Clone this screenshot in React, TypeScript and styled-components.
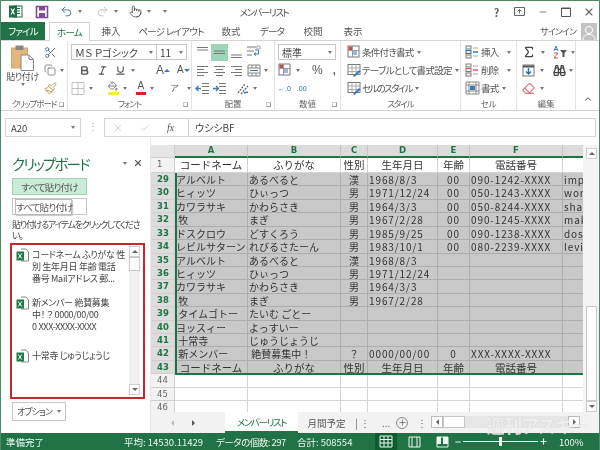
import React from 'react';
import styled, { createGlobalStyle } from 'styled-components';
import {
  Undo2, Redo2, Pointer, Scissors, Copy, Paintbrush, Bold, Italic, Underline, ChevronUp, X, Check, Minus, Plus,
  Binoculars, Eraser, Sigma, PaintBucket,
} from 'lucide-react';

const GlobalStyle = createGlobalStyle`
  html, body { margin: 0; padding: 0; background: #fff; }
  body {
    font-family: "Noto Sans CJK JP", "Noto Sans", sans-serif;
    font-feature-settings: "palt";
    color: #444;
  }
  * { box-sizing: border-box; }
  svg { flex-shrink: 0; }
`;

const GREEN = '#217346';

const Frame = styled.div`
  position: relative;
  width: 600px;
  height: 450px;
  overflow: hidden;
  display: flex;
  flex-direction: column;
  border: 1px solid #4f8a68;
  border-bottom: 0;
  background: #fff;
  filter: blur(0.3px);
`;

/* title bar */
const TitleBar = styled.div`
  height: 21px;
  flex-shrink: 0;
  display: grid;
  grid-template-columns: 203px 120px 1fr;
  align-items: center;
`;
const Qat = styled.div`
  display: flex;
  align-items: center;
  gap: 3px;
  padding-left: 7px;
`;
const QatGap = styled.span<{ $w: number }>`
  width: ${(p) => p.$w}px;
`;
const Title = styled.div`
  font-size: 9.5px;
  letter-spacing: -1.4px;
  color: #555;
  text-align: center;
`;
const WinButtons = styled.div`
  display: flex;
  align-items: center;
  justify-content: flex-end;
  gap: 8px;
  padding-right: 3px;
  color: #555;
`;
const WinBtn = styled.span`
  width: 15px;
  height: 15px;
  display: flex;
  align-items: center;
  justify-content: center;
  font-size: 11px;
  font-weight: 700;
  color: #666;
`;
const Caret = styled.span<{ $m?: number }>`
  display: inline-block;
  width: 0;
  height: 0;
  margin-left: ${(p) => p.$m ?? 2}px;
  border-left: 2.5px solid transparent;
  border-right: 2.5px solid transparent;
  border-top: 3px solid #777;
  flex-shrink: 0;
`;

/* tabs */
const TabRow = styled.div`
  height: 19px;
  flex-shrink: 0;
  display: flex;
  align-items: stretch;
  border-bottom: 1px solid #d4d4d4;
  position: relative;
`;
const FileTab = styled.div`
  width: 44px;
  margin-right: 4px;
  background: ${GREEN};
  color: #fff;
  font-size: 9.5px;
  letter-spacing: -0.8px;
  display: flex;
  align-items: center;
  justify-content: center;
`;
const Tab = styled.div<{ $w: number; $active?: boolean; $tight?: boolean }>`
  width: ${(p) => p.$w}px;
  font-size: 9.5px;
  letter-spacing: ${(p) => (p.$tight ? -0.7 : 0)}px;
  white-space: nowrap;
  display: flex;
  align-items: center;
  justify-content: center;
  color: ${(p) => (p.$active ? GREEN : '#555')};
  background: #fff;
  ${(p) =>
    p.$active &&
    `border: 1px solid #d4d4d4; border-bottom: 0; height: 19px;`}
`;
const SignIn = styled.div`
  margin-left: auto;
  display: flex;
  align-items: center;
  gap: 5px;
  font-size: 9px;
  letter-spacing: -0.9px;
  color: #555;
  padding-right: 2px;
`;
const Avatar = styled.div`
  width: 16px;
  height: 17px;
  background: #c4c4c4;
  display: flex;
  align-items: flex-end;
  justify-content: center;
`;

/* ribbon */
const Ribbon = styled.div`
  height: 70px;
  flex-shrink: 0;
  display: flex;
  border-bottom: 1px solid #d4d4d4;
  position: relative;
`;
const Group = styled.div<{ $w: number }>`
  width: ${(p) => p.$w}px;
  flex-shrink: 0;
  display: flex;
  flex-direction: column;
  border-right: 1px solid #e2e2e2;
`;
const GroupBody = styled.div<{ $pl?: number }>`
  flex: 1;
  display: flex;
  flex-direction: column;
  padding: 2px 0 0 ${(p) => p.$pl ?? 3}px;
  min-height: 0;
`;
const GroupLabel = styled.div<{ $tight?: boolean }>`
  position: relative;
  height: 13px;
  font-size: 8.5px;
  letter-spacing: ${(p) => (p.$tight ? -1.1 : 0)}px;
  line-height: 12px;
  color: #666;
  text-align: center;
`;
const Launcher = styled.span`
  position: absolute;
  right: 3px;
  top: 5px;
  width: 5px;
  height: 5px;
  border: 1px solid #999;
  border-top-color: #ccc;
  border-left-color: #ccc;
`;
const RRow = styled.div<{ $gap?: number; $h?: number }>`
  height: ${(p) => p.$h ?? 18}px;
  display: flex;
  align-items: center;
  gap: ${(p) => p.$gap ?? 3}px;
`;
const RGap = styled.span<{ $w: number }>`
  width: ${(p) => p.$w}px;
  flex-shrink: 0;
`;
const ClipLayout = styled.div`
  display: flex;
  gap: 5px;
  padding-left: 2px;
`;
const PasteBig = styled.div`
  width: 33px;
  padding-top: 2px;
  display: flex;
  flex-direction: column;
  align-items: center;
  gap: 1px;
  font-size: 9px;
  letter-spacing: -0.4px;
  line-height: 10px;
  color: #555;
  white-space: nowrap;
`;
const SmallStack = styled.div`
  display: flex;
  flex-direction: column;
  gap: 0;
`;
const Combo = styled.div<{ $w: number }>`
  width: ${(p) => p.$w}px;
  height: 16px;
  border: 1px solid #c6c6c6;
  margin-right: -1px;
  padding: 0 3px;
  display: flex;
  align-items: center;
  justify-content: space-between;
  font-size: 10px;
  color: #444;
  background: #fff;
`;
const Glyph = styled.span<{ $color?: string; $size?: number; $bold?: boolean }>`
  font-size: ${(p) => p.$size ?? 11}px;
  line-height: 1;
  font-family: "Liberation Sans", sans-serif;
  font-weight: ${(p) => (p.$bold ? 700 : 400)};
  color: ${(p) => p.$color ?? '#555'};
`;
const AlignCell = styled.span<{ $on?: boolean }>`
  width: 17px;
  height: 17px;
  display: flex;
  align-items: center;
  justify-content: center;
  background: ${(p) => (p.$on ? '#9fd5b7' : 'transparent')};
`;
const StyleItem = styled.div<{ $tight?: boolean }>`
  height: 18px;
  display: flex;
  align-items: center;
  gap: 1px;
  font-size: 9.5px;
  letter-spacing: ${(p) => (p.$tight ? -1.6 : -0.7)}px;
  color: #555;
  white-space: nowrap;
`;
const ColorBar = styled.span<{ $c: string }>`
  display: flex;
  flex-direction: column;
  align-items: center;
  border-bottom: 3px solid ${(p) => p.$c};
  width: 13px;
  height: 14px;
`;
const Collapse = styled.div`
  width: 24px;
  display: flex;
  align-items: flex-end;
  justify-content: center;
  padding-bottom: 6px;
  color: #555;
`;

/* formula bar */
const FormulaBar = styled.div`
  height: 27px;
  flex-shrink: 0;
  padding: 7px 3px 1px 4px;
  display: flex;
  align-items: stretch;
`;
const NameBox = styled.div`
  width: 76px;
  border: 1px solid #d4d4d4;
  display: flex;
  align-items: center;
  justify-content: space-between;
  padding: 0 5px 0 5px;
  font-size: 9.5px;
  color: #444;
`;
const Dots = styled.div`
  width: 23px;
  text-align: center;
  color: #aaa;
  font-size: 10px;
  line-height: 16px;
`;
const FxBox = styled.div`
  width: 84px;
  border: 1px solid #d4d4d4;
  border-right: 0;
  display: flex;
  align-items: center;
  gap: 17px;
  padding-left: 8px;
  color: #c8c8c8;
`;
const FxLabel = styled.span`
  font-family: "Liberation Serif", serif;
  font-style: italic;
  font-size: 10px;
  color: #555;
`;
const FormulaInput = styled.div`
  flex: 1;
  border: 1px solid #d4d4d4;
  display: flex;
  align-items: center;
  padding-left: 6px;
  font-size: 10px;
  color: #444;
`;

/* main */
const Main = styled.div`
  flex: 1;
  min-height: 0;
  display: flex;
`;
const Panel = styled.div`
  width: 150px;
  flex-shrink: 0;
  padding: 14px 5px 0 8px;
  display: flex;
  flex-direction: column;
  border-right: 1px solid #e6e6e6;
`;
const PanelHead = styled.div`
  display: flex;
  align-items: center;
  justify-content: space-between;
  height: 22px;
  padding: 0 1px 0 3px;
`;
const PanelTitle = styled.div`
  font-size: 14.5px;
  letter-spacing: -1.8px;
  color: ${GREEN};
`;
const PanelTools = styled.div`
  display: flex;
  align-items: center;
  gap: 6px;
  padding-right: 1px;
  color: #555;
`;
const PasteAll = styled.div`
  width: 75px;
  height: 17px;
  margin: 4px 0 0 3px;
  background: #c9ecd8;
  border: 1px solid #9fd5b7;
  font-size: 9.5px;
  letter-spacing: -0.8px;
  color: #555;
  display: flex;
  align-items: center;
  justify-content: center;
`;
const GhostBtn = styled.div`
  position: relative;
  width: 75px;
  height: 17px;
  margin: 3px 0 0 3px;
  border: 1px solid #c6c6c6;
`;
const Tip = styled.div`
  position: absolute;
  left: 2px;
  top: 0;
  width: 57px;
  height: 16px;
  background: #fff;
  border: 1px solid #bbb;
  box-shadow: 1px 1px 1px #ccc;
  font-size: 9.5px;
  letter-spacing: -0.8px;
  line-height: 14px;
  text-align: center;
  color: #555;
  white-space: nowrap;
`;
const Hint = styled.div`
  margin: 4px 0 0 3px;
  font-size: 9px;
  letter-spacing: -1.3px;
  line-height: 11px;
  color: #444;
  white-space: pre;
`;
const ClipList = styled.div`
  height: 156px;
  margin-top: 2px;
  margin-left: 1px;
  border: 2px solid #c4272c;
  display: flex;
  width: 135px;
  background: #fff;
`;
const ClipItems = styled.div`
  flex: 1;
  padding: 3px 0 0 4px;
  display: flex;
  flex-direction: column;
`;
const ClipItem = styled.div<{ $h: number }>`
  height: ${(p) => p.$h}px;
  display: flex;
  gap: 3px;
`;
const ClipText = styled.div`
  padding-top: 1px;
  font-size: 9px;
  letter-spacing: -0.3px;
  line-height: 12px;
  color: #444;
  white-space: pre;
`;
const VScroll = styled.div`
  width: 11px;
  margin: 1px 3px 2px 0;
  background: #f0f0f0;
  display: flex;
  flex-direction: column;
`;
const ScrollBtn = styled.div`
  height: 11px;
  flex-shrink: 0;
  background: #fff;
  border: 1px solid #cfcfcf;
  display: flex;
  align-items: center;
  justify-content: center;
`;
const Thumb = styled.div<{ $h: number }>`
  height: ${(p) => p.$h}px;
  background: #fff;
  border: 1px solid #c6c6c6;
`;
const Spacer = styled.div`
  flex: 1;
`;
const Arrow = styled.span<{ $dir: 'up' | 'down' | 'left' | 'right'; $c?: string }>`
  width: 0;
  height: 0;
  border: 3px solid transparent;
  ${(p) =>
    p.$dir === 'up'
      ? `border-bottom: 3px solid ${p.$c ?? '#666'}; border-top: 0;`
      : p.$dir === 'down'
        ? `border-top: 3px solid ${p.$c ?? '#666'}; border-bottom: 0;`
        : p.$dir === 'left'
          ? `border-right: 3px solid ${p.$c ?? '#666'}; border-left: 0;`
          : `border-left: 3px solid ${p.$c ?? '#666'}; border-right: 0;`}
`;
const OptionBtn = styled.div`
  width: 54px;
  height: 19px;
  margin: 3px 0 0 3px;
  border: 1px solid #c6c6c6;
  font-size: 9px;
  letter-spacing: -0.9px;
  color: #555;
  display: flex;
  align-items: center;
  justify-content: center;
  gap: 5px;
`;

/* sheet */
const SheetWrap = styled.div`
  flex: 1;
  min-width: 0;
  display: flex;
  flex-direction: column;
`;
const SheetArea = styled.div`
  flex: 1;
  min-height: 0;
  display: flex;
  padding-top: 7px;
`;
const GridBox = styled.div`
  position: relative;
  width: 433px;
  overflow: hidden;
  display: grid;
  grid-template-columns: 24px 73px 93px 27px 70px 32px 93px 21px;
  grid-template-rows: 13px 15px repeat(18, 13.43px);
`;
const Corner = styled.div`
  background: #e6e6e6;
  border-right: 1px solid #d0d0d0;
  border-bottom: 1px solid #d0d0d0;
`;
const ColHead = styled.div`
  background: #dcdcdc;
  border-right: 1px solid #c4c4c4;
  border-bottom: 2px solid ${GREEN};
  font-family: "DejaVu Sans", sans-serif;
  font-size: 8.5px;
  font-weight: 700;
  line-height: 11px;
  text-align: center;
  color: ${GREEN};
`;
const RowHead = styled.div<{ $sel?: boolean }>`
  font-family: "DejaVu Sans", sans-serif;
  font-size: 8.5px;
  font-weight: ${(p) => (p.$sel ? 700 : 400)};
  line-height: 13px;
  padding-left: 6px;
  color: ${(p) => (p.$sel ? GREEN : '#666')};
  background: ${(p) => (p.$sel ? '#dcdcdc' : '#f2f2f2')};
  border-bottom: 1px solid #cfcfcf;
  border-right: 1px solid #d0d0d0;
`;
const Cell = styled.div<{ $sel?: boolean; $center?: boolean; $big?: boolean; $latin?: boolean }>`
  white-space: pre;
  font-feature-settings: normal;
  font-size: ${(p) => (p.$big ? 10.5 : 10)}px;
  letter-spacing: ${(p) => (p.$latin ? 0.9 : 0)}px;
  line-height: 13px;
  padding: 0 1px;
  color: #333;
  text-align: ${(p) => (p.$center ? 'center' : 'left')};
  background: ${(p) => (p.$sel ? '#c8c8c8' : '#fff')};
  border-right: 1px solid ${(p) => (p.$sel ? '#adadad' : '#d4d4d4')};
  border-bottom: 1px solid ${(p) => (p.$sel ? '#adadad' : '#d4d4d4')};
`;
const Selection = styled.div`
  position: absolute;
  left: 24px;
  top: 28px;
  width: 409px;
  height: 202px;
  border-left: 2px solid ${GREEN};
  border-bottom: 2px solid ${GREEN};
  pointer-events: none;
`;
const SheetScroll = styled.div`
  width: 16px;
  padding: 3px 2px 0 3px;
  display: flex;
  flex-direction: column;
  background: #f4f4f4;
`;
const SheetBar = styled.div`
  height: 21px;
  flex-shrink: 0;
  display: flex;
  align-items: stretch;
  background: #f2f2f2;
  position: relative;
`;
const SheetNav = styled.div`
  width: 74px;
  display: flex;
  align-items: center;
  gap: 18px;
  padding-left: 20px;
`;
const SheetTab = styled.div<{ $w: number; $active?: boolean }>`
  width: ${(p) => p.$w}px;
  font-size: 9.5px;
  letter-spacing: ${(p) => (p.$active ? -1.3 : 0)}px;
  white-space: nowrap;
  display: flex;
  align-items: center;
  justify-content: center;
  color: ${(p) => (p.$active ? GREEN : '#555')};
  background: ${(p) => (p.$active ? '#fff' : 'transparent')};
  border-bottom: ${(p) => (p.$active ? `2px solid ${GREEN}` : '0')};
`;
const SheetMisc = styled.div`
  width: 76px;
  display: flex;
  align-items: center;
  font-size: 10px;
  color: #666;
`;
const MiscGap = styled.span<{ $w: number }>`
  width: ${(p) => p.$w}px;
`;
const PlusCircle = styled.span`
  width: 12px;
  height: 12px;
  border-radius: 50%;
  border: 1px solid #888;
  margin-left: 6px;
  display: flex;
  align-items: center;
  justify-content: center;
  color: #666;
`;
const HScroll = styled.div`
  width: 149px;
  height: 12px;
  margin: 4px 0 0 0;
  display: flex;
  background: #e6e6e6;
`;
const HBtn = styled.div`
  width: 12px;
  height: 12px;
  background: #fff;
  border: 1px solid #bbb;
  display: flex;
  align-items: center;
  justify-content: center;
`;
const HThumb = styled.div`
  width: 22px;
  background: #fff;
  border: 1px solid #c6c6c6;
`;
const Watermark = styled.div`
  position: absolute;
  right: 11px;
  bottom: -3px;
  font-size: 18px;
  letter-spacing: -0.4px;
  line-height: 22px;
  font-weight: 700;
  color: rgba(255, 255, 255, 0.72);
  text-shadow: 0 0 1px rgba(130, 130, 130, 0.4);
  pointer-events: none;
  z-index: 2;
`;

/* status */
const StatusBar = styled.div`
  height: 17px;
  flex-shrink: 0;
  margin: 0 -1px;
  background: ${GREEN};
  color: #eef6f1;
  font-size: 9.5px;
  display: flex;
  align-items: center;
  padding-left: 6px;
`;
const StatusText = styled.span<{ $w: number; $tight?: boolean }>`
  width: ${(p) => p.$w}px;
  flex-shrink: 0;
  white-space: nowrap;
  letter-spacing: ${(p) => (p.$tight ? -0.5 : 0)}px;
`;
const ViewBtn = styled.span<{ $on?: boolean }>`
  width: 22px;
  height: 17px;
  margin-right: 6px;
  display: flex;
  align-items: center;
  justify-content: center;
  background: ${(p) => (p.$on ? '#0f5c31' : 'transparent')};
`;
const ZoomBox = styled.span`
  margin-left: -5px;
  display: flex;
  align-items: center;
  gap: 1px;
`;
const SliderTrack = styled.span`
  position: relative;
  width: 75px;
  height: 1px;
  background: #eef6f1;
`;
const SliderKnob = styled.span`
  position: absolute;
  left: 36px;
  top: -4px;
  width: 3px;
  height: 9px;
  background: #eef6f1;
`;
const Percent = styled.span`
  margin-left: 11px;
`;

const ExcelLogo = () => (
  <svg width="15" height="15" viewBox="0 0 15 15">
    <rect x="6" y="2" width="8" height="11" fill="#fff" stroke="#1d6f42" />
    <path d="M8 4.500h4M8 7h4M8 9.500h4" stroke="#1d6f42" />
    <rect x="1" y="1.500" width="8" height="12" fill="#1d6f42" />
    <path d="M3 4.500l3.500 6M6.500 4.500l-3.500 6" stroke="#fff" strokeWidth="1.2" />
  </svg>
);
const SaveIcon = () => (
  <svg width="14" height="14" viewBox="0 0 14 14">
    <path d="M1.500 1.500h11v11h-11z" fill="#fff" stroke="#7b4b94" strokeWidth="1.6" />
    <path d="M4 2v3.500h6V2" fill="#7b4b94" />
    <rect x="4" y="8" width="6" height="4" fill="#7b4b94" />
  </svg>
);
const PasteIcon = () => (
  <svg width="23" height="26" viewBox="0 0 23 26">
    <rect x="0.500" y="3" width="16" height="20" fill="#e3b67c" stroke="#d3a66c" />
    <rect x="4.500" y="0.500" width="8" height="4.500" fill="#888" />
    <path d="M10 10h8l4.500 4.500V25.500H10z" fill="#fff" stroke="#888" />
    <path d="M18 10v4.500h4.500" fill="none" stroke="#888" />
  </svg>
);
const Lines = ({ kind }: { kind: string }) => {
  const rows: Record<string, string> = {
    top: 'M2 2.500h11M2 5h11',
    mid: 'M2 6h11M2 8.500h11',
    bot: 'M2 10h11M2 12.500h11',
    left: 'M2 3.500h11M2 6.500h7M2 9.500h11M2 12.500h7',
    center: 'M2 3.500h11M4 6.500h7M2 9.500h11M4 12.500h7',
    right: 'M2 3.500h11M6 6.500h7M2 9.500h11M6 12.500h7',
  };
  return (
    <svg width="15" height="15" viewBox="0 0 15 15">
      <path d={rows[kind]} stroke="#777" fill="none" />
    </svg>
  );
};
const IndentIcon = ({ flip }: { flip?: boolean }) => (
  <svg width="15" height="13" viewBox="0 0 15 13">
    <path d="M7 1.500h7M7 4.500h7M7 8.500h7M7 11.500h7" stroke="#777" />
    <path d={flip ? 'M1 6.500h5M4 4l2.500 2.500L4 9' : 'M6 6.500H1M3.500 4L1 6.500 3.500 9'} fill="none" stroke="#3d7ab5" strokeWidth="1.300" />
  </svg>
);
const OrientIcon = () => (
  <svg width="14" height="13" viewBox="0 0 14 13">
    <path d="M2 11L9 2M5 12l7-8" stroke="#666" strokeWidth="1.300" strokeDasharray="2 1" />
    <path d="M8 11l4-1" stroke="#3d7ab5" strokeWidth="1.300" />
  </svg>
);
const WrapIcon = () => (
  <svg width="15" height="14" viewBox="0 0 15 14">
    <path d="M1 2h9M1 6h7M1 10h5" stroke="#777" />
    <path d="M9 5h3.500v4H8M10 7.500L8 9l2 1.500" fill="none" stroke="#3d7ab5" />
    <path d="M11 1h3v3h-3z" fill="#fff" stroke="#aaa" />
  </svg>
);
const MergeIcon = () => (
  <svg width="14" height="13" viewBox="0 0 14 13">
    <path d="M1 1h12v11H1zM1 4h12M1 9h12M5 1v3M9 1v3M5 9v3M9 9v3" fill="#fff" stroke="#888" />
    <path d="M3 6.500h8" stroke="#3d7ab5" />
  </svg>
);
const BorderIcon = () => (
  <svg width="14" height="13" viewBox="0 0 14 13">
    <path d="M1 .500h12v12H1zM1 6.500h12M7 .500v12" fill="none" stroke="#c0c0c0" />
  </svg>
);
const TableIcon = ({ accent = '#3d7ab5' }: { accent?: string }) => (
  <svg width="14" height="14" viewBox="0 0 14 14">
    <rect x="1" y="1.500" width="12" height="10" fill="#fff" stroke="#777" />
    <path d="M1 5h12M1 8.500h12M5 1.500v10M9 1.500v10" stroke="#aaa" />
    <path d="M6 13l6-6 1.500 1.500-6 5.500z" fill={accent} />
  </svg>
);
const CondIcon = () => (
  <svg width="14" height="14" viewBox="0 0 14 14">
    <rect x="1" y="1" width="11" height="11" fill="#fff" stroke="#777" />
    <rect x="1.500" y="1.500" width="4" height="4" fill="#c0504d" />
    <rect x="6" y="6" width="4" height="4" fill="#9bb7d9" />
    <path d="M1 5.500h11M5.500 1v11" stroke="#999" />
  </svg>
);
const CellIcon = ({ mark }: { mark: string }) => (
  <svg width="15" height="14" viewBox="0 0 15 14">
    <rect x="1" y="1" width="5" height="3" fill="#fff" stroke="#777" />
    <rect x="1" y="5.500" width="5" height="3" fill="#eef" stroke={mark} />
    <rect x="1" y="10" width="5" height="3" fill="#fff" stroke="#777" />
    <path d="M8 7h5" stroke={mark} strokeWidth="1.400" />
    <path d="M8 3h5M8 11h5" stroke="#aaa" />
  </svg>
);
const FormatIcon = () => (
  <svg width="15" height="14" viewBox="0 0 15 14">
    <path d="M1 1h13v12H1zM1 4h13M1 10h13M4 1v12M11 1v12" fill="#fff" stroke="#888" />
    <rect x="5" y="5" width="5" height="4" fill="#3d7ab5" />
  </svg>
);
const SortIcon = () => (
  <svg width="15" height="14" viewBox="0 0 15 14">
    <path d="M1 6l2-5 2 5M1.800 4.500h2.400" fill="none" stroke="#3d7ab5" />
    <path d="M1 8h4l-4 5h4" fill="none" stroke="#c0504d" />
    <path d="M7 5h7l-2.500 3v4h-2V8z" fill="#555" />
  </svg>
);
const FileMini = () => (
  <svg width="13" height="16" viewBox="0 0 13 16">
    <path d="M5 1h5l2.500 3v9H5" fill="#fff" stroke="#888" />
    <rect x="0.500" y="3.500" width="7.500" height="9" fill="#1d7a46" />
    <path d="M2.300 5.500l3.500 5M5.800 5.500l-3.500 5" stroke="#fff" />
  </svg>
);
const Grid3 = () => (
  <svg width="14" height="13" viewBox="0 0 14 13">
    <path d="M1 1h12v11H1zM1 4.500h12M1 8h12M5 1v11M9 1v11" fill="none" stroke="#eef6f1" />
  </svg>
);

const ic = { strokeWidth: 1.6 };

const columns = ['A', 'B', 'C', 'D', 'E', 'F', ''];
type Row = [string, string, string, string, string, string, string];
const headerRow: Row = ['コードネーム', 'ふりがな', '性別', '生年月日', '年齢', '電話番号', ''];
const rows: [number, Row][] = [
  [29, ['アルベルト', 'あるべると', '漢', '1968/8/3', '00', '090-1242-XXXX', 'impa']],
  [30, ['ヒィッツ', 'ひぃっつ', '男', '1971/12/24', '00', '050-1243-XXXX', 'wor']],
  [31, ['カワラサキ', 'かわらさき', '男', '1964/3/3', '00', '050-8244-XXXX', 'shal']],
  [32, [' 牧', 'まぎ', '男', '1967/2/28', '00', '090-1245-XXXX', 'mak']],
  [33, ['ドスクロウ', 'どすくろう', '男', '1985/9/25', '00', '090-1238-XXXX', 'dosı']],
  [34, ['レビルサターン', 'れびるさたーん', '男', '1983/10/1', '00', '080-2239-XXXX', 'levil']],
  [35, ['アルベルト', 'あるべると', '漢', '1968/8/3', '', '', '']],
  [36, ['ヒィッツ', 'ひぃっつ', '男', '1971/12/24', '', '', '']],
  [37, ['カワラサキ', 'かわらさき', '男', '1964/3/3', '', '', '']],
  [38, [' 牧', 'まぎ', '男', '1967/2/28', '', '', '']],
  [39, [' タイムゴトー', 'たいむ ごとー', '', '', '', '', '']],
  [40, ['ヨッスィー', 'よっすいー', '', '', '', '', '']],
  [41, [' 十常寺', 'じゅうじょうじ', '', '', '', '', '']],
  [42, [' 新メンバー', ' 絶賛募集中！', '？', '0000/00/00', '0', 'XXX-XXXX-XXXX', '']],
];
const centered = [2, 4];

export default function App() {
  return (
    <Frame>
      <GlobalStyle />
      <TitleBar>
        <Qat>
          <ExcelLogo />
          <QatGap $w={6} />
          <SaveIcon />
          <QatGap $w={5} />
          <Undo2 size={13} color="#2b6ea8" {...ic} />
          <Caret />
          <QatGap $w={8} />
          <Redo2 size={13} color="#bbb" {...ic} />
          <Caret />
          <QatGap $w={5} />
          <Pointer size={13} color="#555" {...ic} />
          <Caret />
          <QatGap $w={4} />
          <Caret />
        </Qat>
        <Title>メンバーリスト</Title>
        <WinButtons>
          <WinBtn>?</WinBtn>
          <WinBtn>
            <svg width="11" height="9" viewBox="0 0 11 9">
              <path d="M.5.5h10v8H.5zM5.500 2.500v4M3.500 4.500l2-2 2 2" fill="none" stroke="#666" />
            </svg>
          </WinBtn>
          <WinBtn>
            <Minus size={10} />
          </WinBtn>
          <WinBtn>
            <svg width="10" height="10" viewBox="0 0 10 10">
              <path d="M.5 1h9v8.500h-9z" fill="none" stroke="#555" />
              <path d="M.5 1.500h9" stroke="#555" />
            </svg>
          </WinBtn>
          <WinBtn>
            <X size={12} strokeWidth={2.2} />
          </WinBtn>
        </WinButtons>
      </TitleBar>

      <TabRow>
        <FileTab>ファイル</FileTab>
        <Tab $w={41} $active $tight>ホーム</Tab>
        <Tab $w={42}>挿入</Tab>
        <Tab $w={78} $tight>ページ レイアウト</Tab>
        <Tab $w={42}>数式</Tab>
        <Tab $w={40} $tight>データ</Tab>
        <Tab $w={42}>校閲</Tab>
        <Tab $w={38}>表示</Tab>
        <SignIn>
          サインイン
          <Avatar>
            <svg width="14" height="15" viewBox="0 0 14 15">
              <circle cx="7" cy="5" r="3.600" fill="#c4c4c4" stroke="#fff" />
              <path d="M1 15c0-4 2.500-5.500 6-5.500s6 1.500 6 5.500" fill="#c4c4c4" stroke="#fff" />
            </svg>
          </Avatar>
        </SignIn>
      </TabRow>

      <Ribbon>
        <Group $w={67}>
          <GroupBody>
            <ClipLayout>
              <PasteBig>
                <PasteIcon />
                貼り付け
                <Caret $m={0} />
              </PasteBig>
              <SmallStack>
                <RRow><Scissors size={13} color="#4a6a8a" {...ic} /></RRow>
                <RRow $gap={2}><Copy size={12} color="#777" {...ic} /><Caret /></RRow>
                <RRow><Paintbrush size={13} color="#b8923c" {...ic} /></RRow>
              </SmallStack>
            </ClipLayout>
          </GroupBody>
          <GroupLabel $tight>クリップボード<Launcher /></GroupLabel>
        </Group>

        <Group $w={124}>
          <GroupBody>
            <RRow $gap={0}>
              <Combo $w={86}>ＭＳ Ｐゴシック<Caret /></Combo>
              <Combo $w={31}>11<Caret /></Combo>
            </RRow>
            <RRow $gap={7}>
              <RGap $w={1} />
              <Bold size={11} strokeWidth={3} color="#555" />
              <Italic size={11} color="#555" strokeWidth={2.4} />
              <RRow $gap={3}>
                <Underline size={11} color="#555" strokeWidth={2.4} />
                <Caret />
              </RRow>
              <RGap $w={7} />
              <RRow $gap={0}>
                <Glyph $size={12}>A</Glyph>
                <Arrow $dir="up" $c="#3d7ab5" />
              </RRow>
              <RRow $gap={0}>
                <Glyph $size={10}>A</Glyph>
                <Arrow $dir="down" $c="#3d7ab5" />
              </RRow>
            </RRow>
            <RRow $gap={4}>
              <BorderIcon />
              <Caret $m={0} />
              <RGap $w={7} />
              <ColorBar $c="#f5f03c"><PaintBucket size={10} color="#666" /></ColorBar>
              <Caret $m={0} />
              <RGap $w={1} />
              <ColorBar $c="#d8232a"><Glyph $size={10}>A</Glyph></ColorBar>
              <Caret $m={0} />
              <RGap $w={8} />
              <Glyph $size={9}>ア</Glyph>
              <Caret $m={4} />
            </RRow>
          </GroupBody>
          <GroupLabel $tight>フォント<Launcher /></GroupLabel>
        </Group>

        <Group $w={83}>
          <GroupBody $pl={2}>
            <RRow $gap={0}>
              <AlignCell><Lines kind="top" /></AlignCell>
              <AlignCell $on><Lines kind="mid" /></AlignCell>
              <AlignCell><Lines kind="bot" /></AlignCell>
              <AlignCell><WrapIcon /></AlignCell>
            </RRow>
            <RRow $gap={0}>
              <AlignCell><Lines kind="left" /></AlignCell>
              <AlignCell><Lines kind="center" /></AlignCell>
              <AlignCell><Lines kind="right" /></AlignCell>
              <AlignCell><MergeIcon /></AlignCell>
              <Caret />
            </RRow>
            <RRow $gap={0}>
              <AlignCell><IndentIcon /></AlignCell>
              <AlignCell><IndentIcon flip /></AlignCell>
              <RGap $w={6} />
              <AlignCell><OrientIcon /></AlignCell>
              <Caret />
            </RRow>
          </GroupBody>
          <GroupLabel>配置<Launcher /></GroupLabel>
        </Group>

        <Group $w={66}>
          <GroupBody>
            <RRow><Combo $w={58}>標準<Caret /></Combo></RRow>
            <RRow $gap={4}>
              <CondIcon />
              <Caret $m={0} />
              <RGap $w={4} />
              <Glyph $size={12}>%</Glyph>
              <RGap $w={2} />
              <Glyph $size={11} $bold>,</Glyph>
            </RRow>
            <RRow $gap={6}>
              <Glyph $size={7} $color="#2b6ea8">←.0</Glyph>
              <Glyph $size={7} $color="#2b6ea8">.00</Glyph>
            </RRow>
          </GroupBody>
          <GroupLabel>数値<Launcher /></GroupLabel>
        </Group>

        <Group $w={120}>
          <GroupBody $pl={6}>
            <StyleItem><CondIcon />条件付き書式<Caret /></StyleItem>
            <StyleItem><TableIcon />テーブルとして書式設定<Caret /></StyleItem>
            <StyleItem $tight><TableIcon />セルのスタイル<Caret /></StyleItem>
          </GroupBody>
          <GroupLabel $tight>スタイル</GroupLabel>
        </Group>

        <Group $w={56}>
          <GroupBody $pl={4}>
            <StyleItem><CellIcon mark="#2b6ea8" />挿入<Caret $m={7} /></StyleItem>
            <StyleItem><CellIcon mark="#d05a50" />削除<Caret $m={7} /></StyleItem>
            <StyleItem><FormatIcon />書式<Caret /></StyleItem>
          </GroupBody>
          <GroupLabel>セル</GroupLabel>
        </Group>

        <Group $w={59}>
          <GroupBody $pl={5}>
            <RRow $gap={3}>
              <Sigma size={14} color="#444" strokeWidth={2.2} />
              <Caret />
              <RGap $w={2} />
              <SortIcon />
              <Caret $m={0} />
            </RRow>
            <RRow $gap={3}>
              <svg width="13" height="13" viewBox="0 0 13 13">
                <rect x="1" y="1" width="11" height="11" fill="#fff" stroke="#777" />
                <path d="M1 2.500h11" stroke="#555" strokeWidth="2" />
                <path d="M6.500 4v6M4 7.500l2.500 2.500L9 7.500" fill="none" stroke="#2b6ea8" strokeWidth="1.500" />
              </svg>
              <Caret />
              <RGap $w={3} />
              <Binoculars size={13} color="#444" strokeWidth={2.4} />
              <Caret $m={0} />
            </RRow>
            <RRow $gap={3}>
              <Eraser size={13} color="#d9707a" strokeWidth={2} />
              <Caret />
            </RRow>
          </GroupBody>
          <GroupLabel>編集</GroupLabel>
        </Group>

        <Collapse>
          <ChevronUp size={10} strokeWidth={2.4} />
        </Collapse>
      </Ribbon>

      <FormulaBar>
        <NameBox>A20<Caret /></NameBox>
        <Dots>⋮</Dots>
        <FxBox>
          <X size={10} />
          <Check size={10} />
          <FxLabel>fx</FxLabel>
        </FxBox>
        <FormulaInput>ウシシBF</FormulaInput>
      </FormulaBar>

      <Main>
        <Panel>
          <PanelHead>
            <PanelTitle>クリップボード</PanelTitle>
            <PanelTools>
              <Caret $m={0} />
              <X size={10} strokeWidth={2.6} />
            </PanelTools>
          </PanelHead>
          <PasteAll>すべて貼り付け</PasteAll>
          <GhostBtn>
            <Tip>すべて貼り付け</Tip>
          </GhostBtn>
          <Hint>{'貼り付けるアイテムをクリックしてくださ\nい。'}</Hint>
          <ClipList>
            <ClipItems>
              <ClipItem $h={48}>
                <FileMini />
                <ClipText>{'コードネーム ふりがな 性\n別 生年月日 年齢 電話\n番号 Mailアドレス 郵...'}</ClipText>
              </ClipItem>
              <ClipItem $h={53}>
                <FileMini />
                <ClipText>{'新メンバー 絶賛募集\n中！ ？ 0000/00/00\n0 XXX-XXXX-XXXX'}</ClipText>
              </ClipItem>
              <ClipItem $h={30}>
                <FileMini />
                <ClipText>十常寺 じゅうじょうじ</ClipText>
              </ClipItem>
            </ClipItems>
            <VScroll>
              <ScrollBtn><Arrow $dir="up" /></ScrollBtn>
              <Thumb $h={14} />
              <Spacer />
              <ScrollBtn><Arrow $dir="down" /></ScrollBtn>
            </VScroll>
          </ClipList>
          <OptionBtn>オプション<Caret $m={0} /></OptionBtn>
        </Panel>

        <SheetWrap>
          <SheetArea>
            <GridBox>
              <Corner />
              {columns.map((c, i) => (
                <ColHead key={i}>{c}</ColHead>
              ))}
              <RowHead>1</RowHead>
              {headerRow.map((v, i) => (
                <Cell key={i} $center $big>{v}</Cell>
              ))}
              {rows.map(([n, r]) => (
                <React.Fragment key={n}>
                  <RowHead $sel>{n}</RowHead>
                  {r.map((v, i) => (
                    <Cell key={i} $sel $center={centered.includes(i)} $latin={i >= 3}>{v}</Cell>
                  ))}
                </React.Fragment>
              ))}
              <RowHead $sel>43</RowHead>
              {headerRow.map((v, i) => (
                <Cell key={i} $sel $center $big>{v}</Cell>
              ))}
              {[44, 45, 46].map((n) => (
                <React.Fragment key={n}>
                  <RowHead>{n}</RowHead>
                  {headerRow.map((_, i) => (
                    <Cell key={i} />
                  ))}
                </React.Fragment>
              ))}
              <Selection />
            </GridBox>
            <SheetScroll>
              <ScrollBtn><Arrow $dir="up" /></ScrollBtn>
              <Spacer />
              <Thumb $h={95} />
              <ScrollBtn><Arrow $dir="down" /></ScrollBtn>
            </SheetScroll>
          </SheetArea>
          <SheetBar>
            <SheetNav>
              <Arrow $dir="left" $c="#bbb" />
              <Arrow $dir="right" $c="#555" />
            </SheetNav>
            <SheetTab $w={73} $active>メンバーリスト</SheetTab>
            <SheetTab $w={57}>月間予定</SheetTab>
            <SheetMisc>
              | ⋮
              <MiscGap $w={12} />
              ...
              <PlusCircle><Plus size={9} /></PlusCircle>
              <MiscGap $w={9} />
              ⋮
            </SheetMisc>
            <HScroll>
              <HBtn><Arrow $dir="left" /></HBtn>
              <HThumb />
              <Spacer />
              <HBtn><Arrow $dir="right" /></HBtn>
            </HScroll>
            <Watermark>週刊アスキー</Watermark>
          </SheetBar>
        </SheetWrap>
      </Main>

      <StatusBar>
        <StatusText $w={118}>準備完了</StatusText>
        <StatusText $w={92}>平均: 14530.11429</StatusText>
        <StatusText $w={81} $tight>データの個数: 297</StatusText>
        <StatusText $w={78}>合計: 508554</StatusText>
        <ViewBtn $on><Grid3 /></ViewBtn>
        <ViewBtn>
          <svg width="13" height="12" viewBox="0 0 13 12">
            <path d="M1 1h11v10H1zM4 1v10M9 1v10" fill="none" stroke="#eef6f1" />
          </svg>
        </ViewBtn>
        <ViewBtn>
          <svg width="13" height="12" viewBox="0 0 13 12">
            <path d="M1 1h11v10H1z" fill="none" stroke="#eef6f1" />
            <path d="M1 1h4v7H1zM7 1h5v7H7z" fill="#eef6f1" />
          </svg>
        </ViewBtn>
        <ZoomBox>
          <Minus size={8} color="#eef6f1" strokeWidth={3} />
          <SliderTrack><SliderKnob /></SliderTrack>
          <Plus size={9} color="#eef6f1" strokeWidth={3} />
        </ZoomBox>
        <Percent>100%</Percent>
      </StatusBar>
    </Frame>
  );
}
